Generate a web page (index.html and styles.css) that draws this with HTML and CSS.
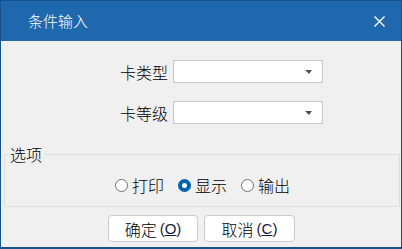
FILE: index.html
```html
<!DOCTYPE html>
<html lang="zh-CN">
<head>
<meta charset="utf-8">
<title>条件输入</title>
<link rel="stylesheet" href="styles.css">
</head>
<body>
<div class="window">
  <div class="titlebar">
    <span class="title">条件输入</span>
    <span class="close">
      <svg width="11" height="11" viewBox="0 0 11 11"><path d="M0.5 0.5 L10.5 10.5 M10.5 0.5 L0.5 10.5" stroke="#fff" stroke-width="1.4" fill="none"/></svg>
    </span>
  </div>
  <div class="content">
    <div class="form">
      <div class="row">
        <span class="label">卡类型</span>
        <div class="combo"><span class="arrow"></span></div>
      </div>
      <div class="row">
        <span class="label">卡等级</span>
        <div class="combo"><span class="arrow"></span></div>
      </div>
    </div>
    <div class="group">
      <div class="group-head">
        <span class="cap-left"></span>
        <span class="legend">选项</span>
        <span class="cap-right"></span>
      </div>
      <div class="group-body">
        <div class="radios">
          <label class="radio"><span class="dot"></span><span>打印</span></label>
          <label class="radio"><span class="dot checked"></span><span>显示</span></label>
          <label class="radio"><span class="dot"></span><span>输出</span></label>
        </div>
      </div>
    </div>
    <div class="buttons">
      <button class="btn">确定<span class="paren">(<u>O</u>)</span></button>
      <button class="btn">取消<span class="paren">(<u>C</u>)</span></button>
    </div>
  </div>
</div>
</body>
</html>
```
FILE: styles.css
```css
html, body {
  margin: 0;
  padding: 0;
}
body {
  width: 402px;
  height: 249px;
  overflow: hidden;
  font-family: "Noto Sans CJK SC", "Noto Sans", sans-serif;
  font-size: 16px;
  font-weight: 300;
  color: #000;
}
.window {
  box-sizing: border-box;
  width: 402px;
  height: 249px;
  border: 1px solid #18528c;
  border-bottom-width: 2px;
  display: flex;
  flex-direction: column;
  background: #f0f0f0;
}
.titlebar {
  height: 40px;
  flex: none;
  background: #2068ae;
  display: flex;
  align-items: center;
  padding-left: 27px;
  padding-right: 16px;
  color: #fff;
}
.title {
  font-size: 15px;
  line-height: 18px;
  flex: 1;
}
.close {
  display: flex;
  width: 11px;
  height: 11px;
  margin-top: 1px;
}
.content {
  flex: 1;
  display: flex;
  flex-direction: column;
}
.form {
  display: flex;
  flex-direction: column;
  gap: 18px;
  padding-top: 19px;
}
.row {
  display: grid;
  grid-template-columns: 167px 150px;
  column-gap: 5px;
  height: 23px;
  align-items: center;
}
.label {
  text-align: right;
  line-height: 20px;
}
.combo {
  box-sizing: border-box;
  height: 23px;
  border: 1px solid #c8c8c8;
  background: #fff;
  display: flex;
  align-items: center;
  justify-content: flex-end;
  padding-right: 10px;
}
.arrow {
  width: 0;
  height: 0;
  border-left: 4px solid transparent;
  border-right: 3px solid transparent;
  border-top: 4px solid #4a5652;
}
.group {
  margin: 21px 1px 0 3px;
  display: flex;
  flex-direction: column;
}
.group-head {
  display: flex;
  height: 18px;
}
.cap-left,
.cap-right {
  box-sizing: border-box;
  align-self: flex-end;
  height: 9px;
  border-top: 1px solid #dcdcdc;
}
.cap-left {
  width: 5px;
  border-left: 1px solid #dcdcdc;
}
.cap-right {
  flex: 1;
  border-right: 1px solid #dcdcdc;
}
.legend {
  padding: 0 2px 0 1px;
  line-height: 18px;
}
.group-body {
  box-sizing: border-box;
  height: 44px;
  border: 1px solid #dcdcdc;
  border-top: none;
  padding-top: 13px;
}
.radios {
  display: flex;
  justify-content: center;
  gap: 14px;
  padding-left: 1px;
}
.radio {
  display: flex;
  align-items: center;
  gap: 4px;
  line-height: 18px;
}
.dot {
  box-sizing: border-box;
  width: 13px;
  height: 13px;
  border-radius: 50%;
  border: 1px solid #6e6e6e;
  background: #fff;
  display: flex;
  align-items: center;
  justify-content: center;
}
.dot.checked {
  border: none;
  background: #0063b1;
}
.dot.checked::after {
  content: "";
  width: 5px;
  height: 5px;
  border-radius: 50%;
  background: #fff;
}
.buttons {
  display: flex;
  justify-content: center;
  gap: 6px;
  margin-top: 8px;
  padding-left: 1px;
}
.btn {
  box-sizing: border-box;
  width: 90px;
  height: 27px;
  background: #fff;
  border: 1px solid #cccccc;
  border-radius: 4px;
  font-family: "Noto Sans CJK SC", "Noto Sans", sans-serif;
  font-size: 16px;
  font-weight: 300;
  line-height: 20px;
  color: #000;
  padding: 0;
  display: flex;
  align-items: center;
  justify-content: center;
}
.btn + .btn {
  width: 91px;
}
.paren {
  font-family: "Liberation Sans", sans-serif;
  font-size: 15px;
  color: #1a1a40;
  margin-left: 3px;
}
```
